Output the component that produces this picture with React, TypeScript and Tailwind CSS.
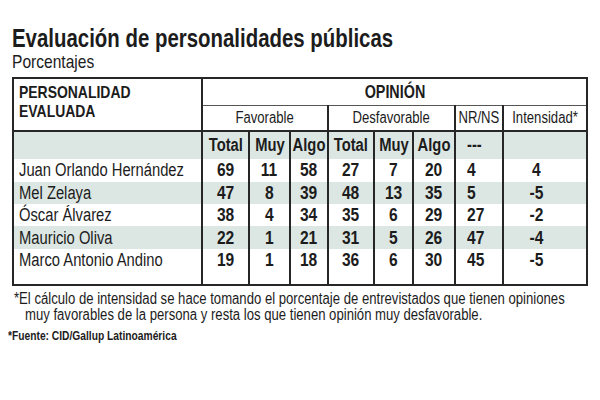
import type { ReactNode } from "react"

const rows = [
  { name: "Juan Orlando Hernández", v: ["69", "11", "58", "27", "7", "20", "4", "4"] },
  { name: "Mel Zelaya", v: ["47", "8", "39", "48", "13", "35", "5", "-5"] },
  { name: "Óscar Álvarez", v: ["38", "4", "34", "35", "6", "29", "27", "-2"] },
  { name: "Mauricio Oliva", v: ["22", "1", "21", "31", "5", "26", "47", "-4"] },
  { name: "Marco Antonio Andino", v: ["19", "1", "18", "36", "6", "30", "45", "-5"] },
]

const line = "border-[#262626]"

// narrow type: Liberation Sans squeezed horizontally
function N({ children, left = false }: { children: ReactNode; left?: boolean }) {
  return (
    <span className={`inline-block whitespace-nowrap scale-x-[0.82] ${left ? "origin-left" : "origin-center"}`}>
      {children}
    </span>
  )
}

function Mid({ children }: { children: ReactNode }) {
  return (
    <div className="flex justify-center">
      <N>{children}</N>
    </div>
  )
}

export default function App() {
  return (
    <div className="w-[600px] h-[400px] overflow-hidden bg-white text-[#1c1c1c] font-['Liberation_Sans',Arial,sans-serif] px-3 pt-[24px]">
      <h1 className="text-[26px] font-bold leading-[28px]">
        <span className="inline-block whitespace-nowrap origin-left scale-x-[0.785]">Evaluación de personalidades públicas</span>
      </h1>
      <p className="text-[19px] leading-[20px]">
        <N left>Porcentajes</N>
      </p>

      <table className={`mt-[5px] w-[574px] table-fixed border-collapse border-2 ${line}`}>
        <colgroup>
          <col className="w-[189px]" />
          <col className="w-[47px]" />
          <col className="w-[41px]" />
          <col className="w-[38px]" />
          <col className="w-[46px]" />
          <col className="w-[39px]" />
          <col className="w-[42px]" />
          <col className="w-[48px]" />
          <col className="w-[84px]" />
        </colgroup>
        <thead>
          <tr className="h-[26px]">
            <th rowSpan={2} className={`border-b-2 border-r-2 ${line} text-left align-top pl-[5px] pt-[4px] text-[17px] font-bold leading-[19px]`}>
              <N left>PERSONALIDAD</N>
              <br />
              <N left>EVALUADA</N>
            </th>
            <th colSpan={8} className="border-b border-[#555] text-[17.5px] font-bold">
              <Mid>OPINIÓN</Mid>
            </th>
          </tr>
          <tr className="h-[21px] text-[16px]">
            <th colSpan={3} className={`border-b-2 ${line} font-normal`}>
              <Mid>Favorable</Mid>
            </th>
            <th colSpan={3} className={`border-b-2 border-l-2 ${line} font-normal`}>
              <Mid>Desfavorable</Mid>
            </th>
            <th className={`border-b-2 border-l-2 ${line} font-normal`}>
              <Mid>NR/NS</Mid>
            </th>
            <th className={`border-b-2 border-l-2 ${line} font-normal`}>
              <Mid>Intensidad*</Mid>
            </th>
          </tr>
          <tr className="h-[22px] bg-[#dce7e3] text-[18px] font-bold">
            <th className={`border-r-2 ${line}`}></th>
            <th><Mid>Total</Mid></th>
            <th className={`border-l-2 ${line}`}><Mid>Muy</Mid></th>
            <th className={`border-l-2 ${line}`}><Mid>Algo</Mid></th>
            <th className={`border-l-2 ${line}`}><Mid>Total</Mid></th>
            <th className={`border-l-2 ${line}`}><Mid>Muy</Mid></th>
            <th className={`border-l-2 ${line}`}><Mid>Algo</Mid></th>
            <th className={`border-l-2 ${line} text-left pl-[11px]`}><N left>---</N></th>
            <th className={`border-l-2 ${line}`}></th>
          </tr>
        </thead>
        <tbody>
          {rows.map((r, i) => (
            <tr key={r.name} className={`h-[22.4px] ${i % 2 === 1 ? "bg-[#dce7e3]" : ""}`}>
              <td className={`border-r-2 ${line} pl-[5px] text-[18px] leading-[20px] whitespace-nowrap`}>
                <N left>{r.name}</N>
              </td>
              {r.v.map((n, j) => (
                <td
                  key={j}
                  className={`${j > 0 ? `border-l-2 ${line}` : ""} text-[19px] font-bold leading-[20px] ${
                    j === 6 ? "text-left pl-[11px]" : j === 7 ? "text-center pr-[18px]" : "text-center"
                  }`}
                >
                  <N left={j === 6}>{n}</N>
                </td>
              ))}
            </tr>
          ))}
          <tr className="h-[14px]">
            <td className={`border-r-2 ${line}`}></td>
            <td></td>
            <td className={`border-l-2 ${line}`}></td>
            <td className={`border-l-2 ${line}`}></td>
            <td className={`border-l-2 ${line}`}></td>
            <td className={`border-l-2 ${line}`}></td>
            <td className={`border-l-2 ${line}`}></td>
            <td className={`border-l-2 ${line}`}></td>
            <td className={`border-l-2 ${line}`}></td>
          </tr>
        </tbody>
      </table>

      <div className="mt-[5px] pl-[2px] text-[16px] leading-[16px]">
        <p><N left>*El cálculo de intensidad se hace tomando el porcentaje de entrevistados que tienen opiniones</N></p>
        <p className="pl-[11px]"><N left>muy favorables de la persona y resta los que tienen opinión muy desfavorable.</N></p>
      </div>
      <p className="mt-[6px] -ml-[4px] text-[12.5px] font-bold leading-[14px]">
        <N left>*Fuente: CID/Gallup Latinoamérica</N>
      </p>
    </div>
  )
}
